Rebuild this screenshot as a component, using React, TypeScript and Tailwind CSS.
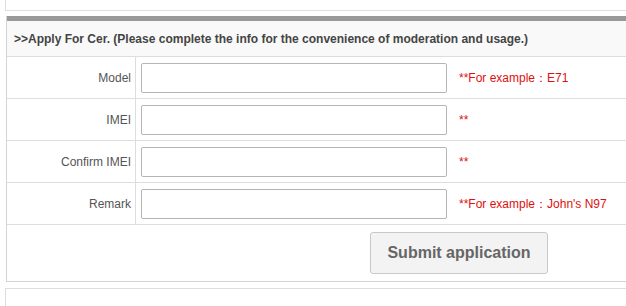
import React from "react";

const rows = [
  { label: "Model", hint: "**For example：E71" },
  { label: "IMEI", hint: "**" },
  { label: "Confirm IMEI", hint: "**" },
  { label: "Remark", hint: "**For example：John's N97" },
];

export default function App() {
  return (
    <div className="w-[626px] h-[306px] overflow-hidden bg-white" style={{ fontFamily: '"Liberation Sans", Arial, sans-serif' }}>
      <div className="ml-[5px] h-[11px] border-l border-b border-[#dddddd]" />
      <div className="ml-[6px] mt-[5px] border-l border-[#d4d4d4]">
        <div className="h-[5px] bg-[#999999]" />
        <div className="h-[36px] bg-[#f9f9f9] border-b border-[#dddddd] flex items-center pl-[7px] text-[12px] font-bold text-[#444444]">
          &gt;&gt;Apply For Cer. (Please complete the info for the convenience of moderation and usage.)
        </div>
        {rows.map((r) => (
          <div key={r.label} className="h-[42px] flex border-b border-[#dddddd]">
            <div className="w-[129px] border-r border-[#dddddd] flex items-center justify-end pr-[4px] text-[12px] text-[#555555]">
              {r.label}
            </div>
            <div className="flex items-center pl-[5px]">
              <input className="w-[306px] h-[30px] border border-[#b5b5b5] rounded-[2px] bg-white outline-none" />
              <span className="ml-[12px] text-[12px] text-[#dd1111]">{r.hint}</span>
            </div>
          </div>
        ))}
        <div className="h-[57px] border-b border-[#d4d4d4] flex items-center pl-[363px]">
          <button className="w-[178px] h-[42px] bg-[#f3f3f3] border border-[#c8c8c8] rounded-[3px] text-[16px] font-bold text-[#666666]">
            Submit application
          </button>
        </div>
      </div>
      <div className="ml-[5px] mt-[6px] h-[30px] border-l border-t border-[#dddddd]" />
    </div>
  );
}
